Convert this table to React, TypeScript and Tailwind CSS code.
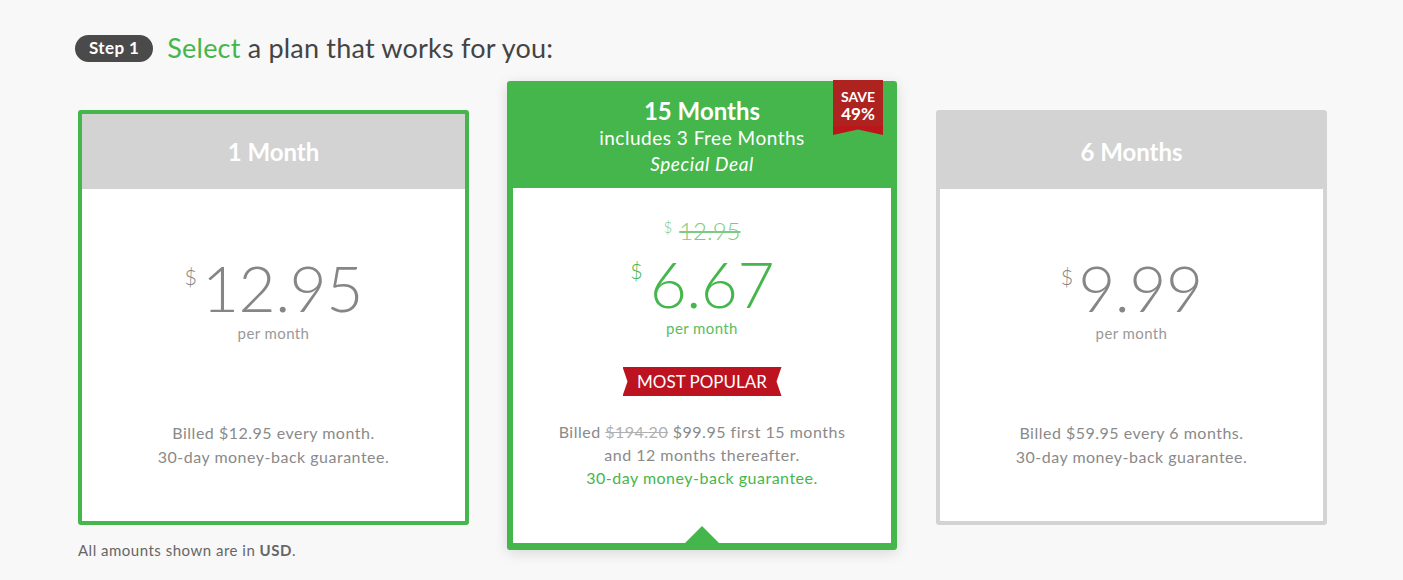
import React from "react";

const GREEN = "text-[#45b64b]";

function SideCard({
  title,
  price,
  lines,
  selected,
}: {
  title: string;
  price: string;
  lines: string[];
  selected?: boolean;
}) {
  return (
    <div
      className={`w-[391px] h-[415px] bg-white rounded-[3px] border-4 flex flex-col ${
        selected ? "border-[#45b64b]" : "border-[#d3d3d3]"
      }`}
    >
      <div className="h-[75px] bg-[#d3d3d3] flex items-center justify-center text-white text-[24px] font-bold">
        {title}
      </div>
      <div className="flex flex-col items-center pt-[67px]">
        <div className="flex items-start text-[#868686]">
          <span className="text-[22px] leading-none mt-[10px] mr-[5px] font-light">$</span>
          <span className="text-[64px] leading-none font-light tracking-[-0.5px]">{price}</span>
        </div>
        <div className="mt-[3px] text-[15px] leading-[20px] tracking-[0.4px] text-[#999]">per month</div>
        <div className="mt-[78px] text-[16px] leading-[24px] tracking-[0.5px] text-[#8a8a8a] text-center">
          {lines.map((l) => (
            <div key={l}>{l}</div>
          ))}
        </div>
      </div>
    </div>
  );
}

function FeaturedCard() {
  return (
    <div className="relative w-[390px] h-[469px] bg-[#45b64b] rounded-[3px] px-[6px] pb-[7px] flex flex-col shadow-[0_3px_14px_rgba(0,0,0,0.13)]">
      {/* save ribbon */}
      <div className="absolute top-[-1px] right-[14px] w-[50px] h-[55px] bg-[linear-gradient(#ae2320_0,#ae2320_84%,#bd151c_84%)] [clip-path:polygon(0_0,100%_0,100%_100%,50%_90%,0_100%)] flex flex-col items-center pt-[9px] text-white font-bold">
        <span className="text-[14px] leading-[16px]">SAVE</span>
        <span className="text-[17px] leading-[17px]">49%</span>
      </div>

      <div className="h-[107px] flex flex-col items-center pt-[16px] text-white">
        <div className="text-[24px] leading-[28px] font-bold">15 Months</div>
        <div className="text-[19px] leading-[26px] tracking-[0.5px]">includes 3 Free Months</div>
        <div className="text-[19px] leading-[26px] tracking-[0.6px] italic">Special Deal</div>
      </div>

      <div className="relative flex-1 bg-white flex flex-col items-center pt-[29px]">
        <div className="flex items-start text-[#7dcb80] h-[28px]">
          <span className="text-[15px] leading-none mt-[3px] mr-[7px] font-light">$</span>
          <span className="text-[24px] leading-[28px] font-light line-through">12.95</span>
        </div>
        <div className={`flex items-start mt-[7px] ${GREEN}`}>
          <span className="text-[22px] leading-none mt-[8px] mr-[7px] font-light">$</span>
          <span className="text-[64px] leading-none font-light tracking-[-0.5px]">6.67</span>
        </div>
        <div className="mt-[2px] text-[15px] leading-[20px] tracking-[0.4px] text-[#5bbd60]">per month</div>
        <div className="mt-[29px] w-[159px] h-[29px] bg-[#bd1321] [clip-path:polygon(0_0,100%_0,154px_50%,100%_100%,0_100%,5px_50%)] flex items-center justify-center text-white text-[17px]">
          MOST POPULAR
        </div>
        <div className="mt-[24px] text-[16px] leading-[23px] tracking-[0.5px] text-[#8a8a8a] text-center">
          <div>
            Billed <span className="line-through text-[#b0b0b0]">$194.20</span> $99.95 first 15 months
          </div>
          <div>and 12 months thereafter.</div>
          <div className={GREEN}>30-day money-back guarantee.</div>
        </div>
        <svg
          className="absolute bottom-0 left-1/2 -translate-x-1/2"
          width="34"
          height="17"
          viewBox="0 0 34 17"
        >
          <polygon points="0,17 17,0 34,17" fill="#45b64b" />
        </svg>
      </div>
    </div>
  );
}

export default function App() {
  return (
    <div className="min-h-[580px] bg-[#f8f8f8] font-['Lato','Liberation_Sans',sans-serif] overflow-hidden">
      <div className="w-[1249px] ml-[78px] pt-[33px]">
        <div className="flex items-center gap-[14px] -ml-[3px]">
          <div className="h-[27px] px-[14px] rounded-full bg-[#4a4a4a] text-white text-[17px] tracking-[0.4px] font-bold flex items-center">
            Step 1
          </div>
          <h1 className="text-[27px] leading-[30px] tracking-[0.2px] text-[#444]">
            <span className={GREEN}>Select</span> a plan that works for you:
          </h1>
        </div>

        <div className="flex items-start gap-[38px] mt-[18px]">
          <div className="flex flex-col mt-[29px]">
            <SideCard
              title="1 Month"
              price="12.95"
              selected
              lines={["Billed $12.95 every month.", "30-day money-back guarantee."]}
            />
            <div className="mt-[15px] text-[15px] leading-[20px] tracking-[0.5px] text-[#666]">
              All amounts shown are in <b>USD</b>.
            </div>
          </div>
          <FeaturedCard />
          <div className="mt-[29px] ml-[1px]">
            <SideCard
              title="6 Months"
              price="9.99"
              lines={["Billed $59.95 every 6 months.", "30-day money-back guarantee."]}
            />
          </div>
        </div>
      </div>
    </div>
  );
}
